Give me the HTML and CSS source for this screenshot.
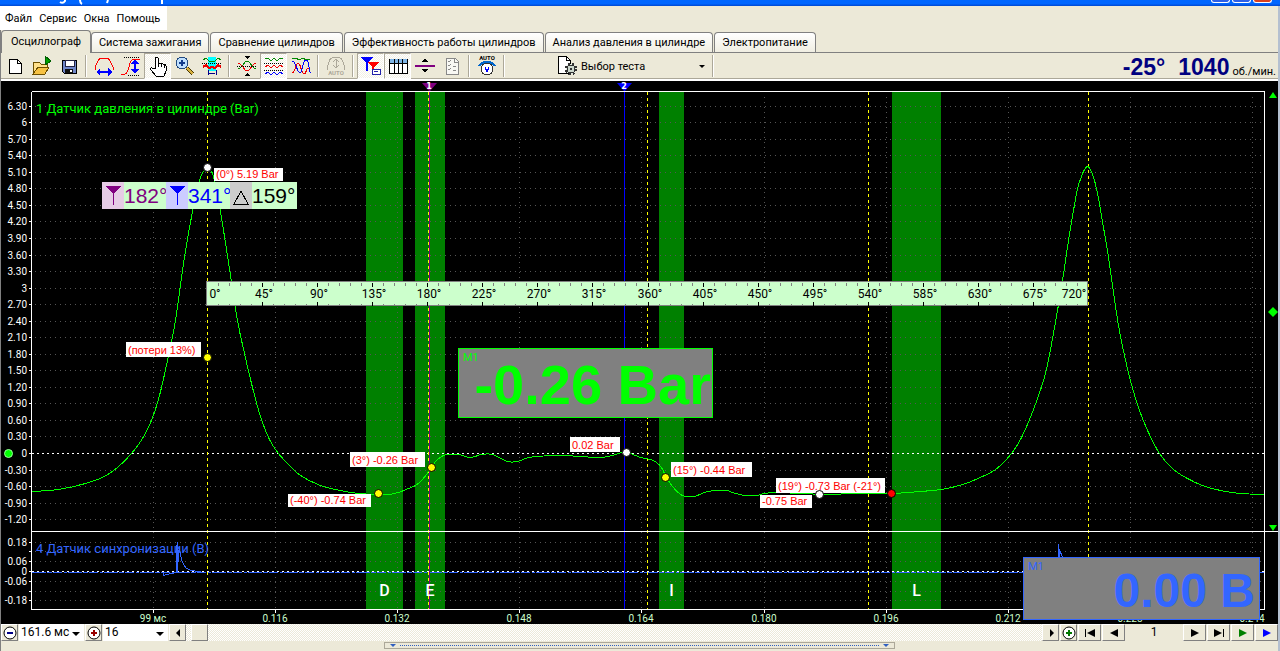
FILE: index.html
```html
<!DOCTYPE html>
<html lang="ru">
<head>
<meta charset="utf-8">
<title>Осциллограф</title>
<link rel="stylesheet" href="styles.css">
</head>
<body>
<div class="app">
  <header class="titlebar">
    <svg class="title-tails" width="180" height="6" aria-hidden="true"><g fill="none" stroke="#fff" stroke-width="2"><path d="M60 2q3 2 5-1V0M80 0q0 3 2 4M108 0l-1 3M162 0v4"/></g></svg>
    <div class="win-buttons"><i class="win"></i><i class="win"></i><i class="win win-close"></i></div>
  </header>

  <nav class="menu">
    <a href="#file">Файл</a><a href="#service">Сервис</a><a href="#windows">Окна</a><a href="#help">Помощь</a>
  </nav>

  <div class="tabs" role="tablist">
    <button class="tab active" role="tab" aria-selected="true">Осциллограф</button>
    <button class="tab" role="tab">Система зажигания</button>
    <button class="tab" role="tab">Сравнение цилиндров</button>
    <button class="tab" role="tab">Эффективность работы цилиндров</button>
    <button class="tab" role="tab">Анализ давления в цилиндре</button>
    <button class="tab" role="tab">Электропитание</button>
  </div>

  <div class="toolbar">
    <button class="tool" aria-label="Новый"><svg viewBox="0 0 22 22"><path d="M5 4h8l4 4v10H5z" fill="#fff" stroke="#000"/><path d="M13 4v4h4" fill="none" stroke="#000"/></svg></button>
    <button class="tool" aria-label="Открыть"><svg viewBox="0 0 22 22"><path d="M2 19V8l2-1h4l2 2h6v3" fill="#ffe08a" stroke="#6b4e00"/><path d="M2 19l5-7h11l-4 7z" fill="#f6c244" stroke="#6b4e00"/><path d="M14 1v9l6-4z" fill="#00a000" stroke="#006000"/></svg></button>
    <button class="tool" aria-label="Сохранить"><svg viewBox="0 0 22 22"><path d="M4 5h14v13H6l-2-2z" fill="#6f86c8" stroke="#000"/><path d="M7 5h9v6H7z" fill="#fff" stroke="#224"/><path d="M7 14h8v4H7z" fill="#111"/><path d="M12 15h2v2h-2z" fill="#fff"/></svg></button>
    <i class="sep"></i>
    <button class="tool" aria-label="Период"><svg viewBox="0 0 22 22"><path d="M2 15v-3C4 10 4 3 9 3h4c5 0 5 7 7 9v3" fill="none" stroke="#f00"/><path d="M5 17h12" stroke="#00f" stroke-width="2"/><path d="M7 13v8l-4-4zM15 13v8l4-4z" fill="#00f"/></svg></button>
    <button class="tool" aria-label="Амплитуда"><svg viewBox="0 0 22 22"><path d="M1 19h4c5-1 3-15 9-15h6" fill="none" stroke="#f00"/><path d="M4 2h16M8 20h12" stroke="#000" stroke-dasharray="1 1"/><path d="M15 7v10" stroke="#00f" stroke-width="2"/><path d="M11 9h8l-4-5zM11 14h8l-4 5z" fill="#00f"/></svg></button>
    <button class="tool on" aria-label="Рука"><svg viewBox="0 0 22 22"><path d="M8 13V3q2-2 3 0v6q2-2 3 0 2-1 3 1 2-1 2 1v5l-2 5H9l-5-6q-1-3 1-2z" fill="#fff" stroke="#000"/><path d="M11 9v3M14 9v3M17 10v3" stroke="#000"/></svg></button>
    <button class="tool" aria-label="Масштаб"><svg viewBox="0 0 22 22"><path d="M13 13l6 6" stroke="#4a3a00" stroke-width="4"/><path d="M13 13l6 6" stroke="#d8b040" stroke-width="2"/><circle cx="8" cy="8" r="6" fill="#bfe0ff" stroke="#234a80"/><path d="M5 8h6M8 5v6" stroke="#123c8c" stroke-width="2"/></svg></button>
    <button class="tool" aria-label="Выделение"><svg viewBox="0 0 22 22"><path d="M7 2h8v14H7z" fill="#0ff"/><path d="M2 5l3-2 3 3h6l3-3 3 2" fill="none" stroke="#080"/><path d="M2 12l3-2 3 3 3-1 3 1 3-3 3 2" fill="none" stroke="#e00" stroke-width="2"/><path d="M1 8h20" stroke="#000" stroke-dasharray="1 1"/><path d="M7 15v5M15 15v5M8 18h6" stroke="#008"/></svg></button>
    <i class="sep"></i>
    <button class="tool" aria-label="Центр"><svg viewBox="0 0 22 22"><g fill="none"><path d="M2 14c5-1 6-8 9-8s5 7 9 8" stroke="#080"/><path d="M2 8c5 1 6 8 9 8s5-7 9-8" stroke="#e00"/><path d="M1 11h20" stroke="#000" stroke-dasharray="1 1"/></g><path d="M8 1h6l-3 3zM8 21h6l-3-3z"/></svg></button>
    <button class="tool on" aria-label="Раздельно"><svg viewBox="0 0 22 22"><g fill="none"><path d="M2 4l3-1 3 3 3-3 3 3 3-3 3 1" stroke="#080"/><path d="M2 12l3-2 3 3 3-3 3 3 3-3 3 2" stroke="#e00"/><path d="M2 19l3-2 3 3 3-3 3 3 3-3 3 2" stroke="#00f"/><path d="M1 8h20M1 15h20" stroke="#000" stroke-dasharray="1 1"/></g></svg></button>
    <button class="tool" aria-label="Совместно"><svg viewBox="0 0 22 22"><g fill="none"><path d="M2 4l4-1 3 2 4-2 3 2 4-1" stroke="#080"/><path d="M2 18c4 0 3-10 6-10s3 11 6 11 2-9 6-5" stroke="#e00"/><path d="M2 7c3-4 5 11 8 11s2-13 6-13 2 12 5 13" stroke="#00f"/></g></svg></button>
    <i class="sep"></i>
    <button class="tool" aria-label="Авто" disabled><svg viewBox="0 0 22 22"><path d="M2 15C4 3 6 2 11 2s7 1 9 13M11 4v9M8 7l3-3 3 3M8 10l3 3 3-3" fill="none" stroke="#aca899"/><text x="11" y="20" class="ico-text ico-dim">AUTO</text></svg></button>
    <i class="sep"></i>
    <button class="tool on" aria-label="Маркеры"><svg viewBox="0 0 22 22"><path d="M1 2h12L8 8v8H6V8z" fill="#00f"/><path d="M8 7h11l-5 5v5h-2v-5z" fill="#f00"/><path d="M12 14h8v5h-8z" fill="#fff" stroke="#22a"/><path d="M14 16h2v1M17 16h1" stroke="#22a" fill="none"/></svg></button>
    <button class="tool on" aria-label="Таблица"><svg viewBox="0 0 22 22"><path d="M2 4h18v14H2z" fill="#fff" stroke="#000"/><path d="M3 4h17v4H3z" fill="#7fb5e6"/><path d="M2 8h18M7 4v14M11 4v14M15 4v14" stroke="#000"/></svg></button>
    <button class="tool" aria-label="Линия"><svg viewBox="0 0 22 22"><path d="M1 11h20" stroke="#800080" stroke-width="2"/><path d="M8 7h6l-3-4zM8 14h6l-3 4z"/></svg></button>
    <button class="tool" aria-label="Отчёт"><svg viewBox="0 0 22 22"><path d="M5 3h9l3 3v13H5z" fill="#f8f8f4" stroke="#888"/><path d="M13 3v4h4M7 6l1 1 2-2M7 10l1 1 2-2M7 14l1 1 2-2M12 11h3M12 15h3" fill="none" stroke="#888"/></svg></button>
    <i class="sep"></i>
    <button class="tool" aria-label="Авто вольтметр"><svg viewBox="0 0 22 22"><text x="11" y="5" class="ico-text">AUTO</text><path d="M3 11q2-4 8-4t8 4" fill="none" stroke="#06c" stroke-width="2"/><circle cx="11" cy="14" r="6" fill="#fff" stroke="#333"/><path d="M9 12l2 5 2-5" fill="none" stroke="#00f"/></svg></button>
    <i class="sep"></i>
    <label class="test-pick">
      <svg viewBox="0 0 22 22"><path d="M2 1h8l4 4v13H2z" fill="#fff" stroke="#000"/><path d="M10 1v4h4" fill="none" stroke="#000"/><circle cx="15" cy="14" r="5" fill="#dfe8df" stroke="#333" stroke-width="3" stroke-dasharray="2 2"/><circle cx="15" cy="14" r="4" fill="#cdd8cd" stroke="#333"/><circle cx="15" cy="14" r="1" fill="#333"/></svg>
      <select aria-label="Выбор теста"><option>Выбор теста</option></select>
    </label>
    <i class="sep"></i>
    <output class="readout"><b>-25°</b><b>1040</b><span>об./мин.</span></output>
  </div>

  <main class="scope">
    <svg class="trace" id="trace" role="img" aria-label="Осциллограмма"></svg>
    <div class="cursors">
      <i class="cur cur-a"><svg viewBox="0 0 16 20"><path d="M0 0h16L9 8v11H8V8z" fill="#800080"/></svg></i><span class="val val-a">182°</span>
      <i class="cur cur-b"><svg viewBox="0 0 16 20"><path d="M0 0h16L9 8v11H8V8z" fill="#00f"/></svg></i><span class="val val-b">341°</span>
      <i class="cur cur-d"><svg viewBox="0 0 16 20"><path d="M1 18h14L8 5z" fill="none" stroke="#000"/></svg></i><span class="val val-d">159°</span>
    </div>
    <div class="meter meter-bar"><small>M1</small><strong>-0.26 Bar</strong></div>
    <div class="meter meter-volt"><small>M1</small><strong>0.00 В</strong></div>
  </main>

  <footer class="controls">
    <button class="btn btn-s" aria-label="Уменьшить"><svg viewBox="0 0 14 14"><circle cx="7" cy="7" r="6" fill="#fff" stroke="#000"/><path d="M4 7h6" stroke="#008" stroke-width="2"/></svg></button>
    <label class="drop"><select aria-label="Время"><option>161.6 мс</option></select></label>
    <button class="btn btn-s" aria-label="Увеличить"><svg viewBox="0 0 14 14"><circle cx="7" cy="7" r="6" fill="#fff" stroke="#000"/><path d="M4 7h6M7 4v6" stroke="#900" stroke-width="2"/></svg></button>
    <label class="drop"><select aria-label="Масштаб"><option>16</option></select></label>
    <div class="scroll">
      <button class="btn btn-s" aria-label="Влево"><svg viewBox="0 0 14 14"><path d="M9 3v8L5 7z"/></svg></button>
      <i class="thumb"></i>
      <button class="btn btn-s" aria-label="Вправо"><svg viewBox="0 0 14 14"><path d="M6 3v8l4-4z"/></svg></button>
    </div>
    <button class="btn btn-s" aria-label="Добавить"><svg viewBox="0 0 14 14"><circle cx="7" cy="7" r="6" fill="#fff" stroke="#000"/><path d="M4 7h6M7 4v6" stroke="#070" stroke-width="2"/></svg></button>
    <button class="btn" aria-label="В начало"><svg viewBox="0 0 14 14"><path d="M2 3h1v8H2zM12 3v8L4 7z"/></svg></button>
    <button class="btn" aria-label="Назад"><svg viewBox="0 0 14 14"><path d="M11 3v8L3 7z"/></svg></button>
    <span class="page">1</span>
    <button class="btn" aria-label="Вперёд"><svg viewBox="0 0 14 14"><path d="M3 3v8l8-4z"/></svg></button>
    <button class="btn" aria-label="В конец"><svg viewBox="0 0 14 14"><path d="M2 3v8l8-4zM11 3h1v8h-1z"/></svg></button>
    <button class="btn" aria-label="Пуск"><svg viewBox="0 0 14 14"><path d="M3 3v8l8-4z" fill="#008000"/></svg></button>
    <button class="btn" aria-label="Запись"><svg viewBox="0 0 14 14"><path d="M3 3v8l8-4z" fill="#00f"/></svg></button>
  </footer>
  <div class="status"><div class="grip"><i class="grip-arrow"></i><i class="grip-dots"></i><i class="grip-arrow"></i></div></div>
</div>
<script src="scope.js"></script>
</body>
</html>
```

FILE: styles.css
```css
* { box-sizing: border-box; }
body { margin: 0; font: 11px/14px Roboto, "Open Sans", sans-serif; color: #000; background: #ece9d8; }
button, select { font: inherit; color: inherit; margin: 0; padding: 0; border: 0; background: none; border-radius: 0; }
.app { display: flex; flex-direction: column; min-height: 100vh; border-left: 1px solid #808080; border-right: 2px solid #b4c0d0; }

.titlebar { display: flex; justify-content: space-between; height: 6px; margin: 0 -2px 0 -1px; overflow: hidden; background: linear-gradient(#0066ff 60%, #0048d0); }
.win-buttons { display: flex; gap: 2px; padding-right: 8px; }
.win { width: 19px; height: 3px; border: 1px solid #fff; border-top: 0; border-radius: 0 0 3px 3px; background: #2c60e8; }
.win-close { background: #d84020; }

.menu { display: flex; gap: 7px; align-self: flex-start; height: 24px; padding: 6px 7px 0 5px; background: #fff; margin-left: -1px; }
.menu a { color: #000; text-decoration: none; }

.tabs { display: flex; align-items: flex-end; gap: 1px; height: 23px; border-bottom: 1px solid #808080; }
.tab { height: 20px; padding: 0 7px; white-space: nowrap; border: 1px solid #808080; border-bottom: 0; border-radius: 4px 4px 0 0; background: linear-gradient(#fff, #f0eee2); }
.tab.active { height: 23px; margin: 0 -1px -1px 0; padding: 0 9px; background: #ece9d8; }

.toolbar { display: flex; align-items: center; height: 28px; border-bottom: 2px solid #fff; box-shadow: inset 0 -1px #aca899; }
.tool { display: flex; align-items: center; justify-content: center; flex: none; width: 27px; height: 26px; }
.tool svg, .test-pick svg { width: 22px; height: 22px; flex: none; shape-rendering: crispEdges; }
.tool.on { background: repeating-conic-gradient(#fff 0 25%, #f2f0e6 0 50%) 0 0 / 2px 2px; border: 1px solid; border-color: #aca899 #fff #fff #aca899; }
.sep { flex: none; width: 2px; height: 22px; margin: 0 3px; border-left: 1px solid #aca899; border-right: 1px solid #fff; }
.ico-text { font: 700 6px Roboto, sans-serif; text-anchor: middle; }
.ico-dim { fill: #aca899; }
.test-pick { position: relative; display: flex; align-items: center; width: 153px; margin-left: 48px; }
.test-pick select { appearance: none; flex: 1; margin-left: 3px; padding-top: 1px; }
.test-pick::after, .drop::after { content: ""; border: 4px solid transparent; border-top-color: #000; border-bottom: 0; position: absolute; right: 4px; top: 50%; margin-top: -1px; pointer-events: none; }
.test-pick::after { border-width: 3px; border-bottom: 0; }
.readout { display: flex; align-items: baseline; margin-left: auto; padding: 3px 2px 0 0; color: #000080; font: 700 23px/23px "Liberation Sans", Arial, sans-serif; }
.readout b + b { margin: 0 3px 0 13px; }
.readout span { color: #000; font: 11px/14px Roboto, sans-serif; }

.scope { position: relative; flex: 1; min-height: 400px; background: #000; overflow: hidden; }
.trace { position: absolute; inset: 0; width: 100%; height: 100%; }
.axis { font: 10px Roboto, sans-serif; fill: #fff; }
.axis-time { fill: #ccffcc; text-anchor: middle; }
.axis-y { text-anchor: end; }
.channel { font: 13px Roboto, sans-serif; }
.tag { font: 11px "Liberation Sans", Arial, sans-serif; fill: #f00; }
.deg { font: 12px Roboto, sans-serif; fill: #000; text-anchor: middle; }
.phase { font: 500 16px Roboto, sans-serif; fill: #fff; text-anchor: middle; }
.flag { font: 700 8px "DejaVu Sans", sans-serif; fill: #fff; text-anchor: middle; }

.cursors { position: absolute; left: 101px; top: 101px; display: flex; height: 27px; background: #ccffcc; font: 21px/27px "Liberation Sans", Arial, sans-serif; }
.cur { display: flex; align-items: center; justify-content: center; width: 22px; }
.cur svg { width: 16px; height: 20px; shape-rendering: crispEdges; }
.cur-a { background: #e6cce6; }
.cur-b { background: #ccccff; }
.cur-d { background: #cccccc; }
.val { width: 42px; overflow: hidden; }
.val-a { color: #800080; }
.val-b { color: #0000ff; }
.val-d { width: 45px; }

.meter { position: absolute; display: flex; justify-content: flex-end; background: #808080; white-space: nowrap; font-family: "Liberation Sans", Arial, sans-serif; }
.meter small { position: absolute; left: 4px; top: 2px; font: 11px/14px Roboto, sans-serif; }
.meter-bar { left: 457px; top: 267px; width: 255px; height: 70px; padding-right: 1px; color: #00ff00; border: 1px solid #00ff00; font-size: 56px; line-height: 72px; }
.meter-volt { right: 18px; bottom: 4px; width: 237px; height: 63px; padding-right: 4px; color: #3366ff; border: 1px solid #3366ff; font-size: 48px; line-height: 66px; }

.controls { display: flex; align-items: stretch; height: 17px; gap: 1px; }
.btn { display: flex; align-items: center; justify-content: center; flex: none; width: 23px; background: #ece9d8; border: 1px solid; border-color: #fff #808080 #808080 #fff; }
.btn-s { width: 17px; }
.btn svg { width: 14px; height: 14px; flex: none; }
.drop { position: relative; flex: none; width: 65px; background: #fff; }
.drop select { appearance: none; width: 100%; height: 17px; padding-left: 2px; font-size: 12px; line-height: 17px; }
.scroll { display: flex; flex: 1; background: repeating-conic-gradient(#fff 0 25%, #ece9d8 0 50%) 0 0 / 2px 2px; }
.thumb { width: 17px; margin: 0 auto 0 5px; background: #ece9d8; border: 1px solid; border-color: #fff #808080 #808080 #fff; }
.page { width: 56px; text-align: center; font-size: 12px; line-height: 17px; }

.status { height: 10px; padding-top: 1px; }
.grip { display: flex; align-items: center; justify-content: space-between; width: 40%; height: 7px; margin: 0 auto; padding: 0 5px; border: 1px solid #aca899; }
.grip-arrow { border: 3px solid transparent; border-top-color: #3060c0; border-bottom: 0; }
.grip-dots { flex: 1; margin: 0 4px; border-top: 1px dotted #3060c0; }
```

FILE: scope.js
```js
// Draws the oscillogram. Chart data is kept in base units (a 1277 x 543 field)
// and mapped to the current size of the panel.
const BASE_W = 1277, BASE_H = 543;
const svg = document.getElementById('trace');

const pressure = [[31,410],[57,408],[84,402],[103,395],[116,386],[130,372],[141,357],[150,339],[158,314],[166,279],[174,239],[182,182],[191,130],[198,99],[202,90],[206,86],[210,90],[213,99],[219,130],[227,181],[236,239],[243,272],[251,306],[259,335],[268,358],[277,372],[287,383],[299,394],[319,404],[339,409],[357,412],[377,413],[387,413],[397,411],[407,407],[414,404],[421,398],[430,386],[435,379],[442,374],[449,373],[457,373],[469,376],[480,373],[491,373],[506,380],[516,380],[524,377],[534,375],[559,374],[579,375],[599,376],[611,374],[621,371],[629,372],[639,376],[649,378],[655,381],[660,386],[664,394],[671,405],[679,413],[685,415],[693,415],[703,411],[713,409],[725,409],[734,412],[744,414],[755,414],[763,412],[774,411],[799,412],[829,413],[849,412],[889,412],[919,410],[940,408],[954,405],[967,401],[981,395],[991,390],[999,384],[1010,372],[1020,356],[1032,328],[1044,292],[1053,246],[1061,199],[1067,159],[1072,129],[1076,107],[1080,95],[1083,88],[1086,85],[1089,88],[1093,99],[1097,117],[1102,146],[1107,176],[1112,211],[1117,244],[1123,274],[1130,303],[1138,329],[1147,351],[1158,372],[1172,388],[1186,397],[1201,404],[1219,409],[1239,412],[1263,413]];
const syncPulse = [[162,491],[162,494],[165,493],[170,492],[175,491],[175,466],[176,461],[176,491],[177,470],[178,468],[180,478],[182,483],[185,487],[190,489],[196,490],[203,491]];
const syncPulse2 = [[1057,491],[1057,463],[1058,480],[1058,468],[1061,476]];
const yellowX = [206, 427, 646, 867, 1087];
const phases = [[365,402,'D'],[414,444,'E'],[658,683,'I'],[891,940,'L']];
const times = ['99 мс','0.116','0.132','0.148','0.164','0.180','0.196','0.212','0.228','0.244'];
// x, y, width, height, text
const tags = [[213,87,69,13,'(0°) 5.19 Bar'],[125,261,75,15,'(потери 13%)'],[287,413,83,13,'(-40°) -0.74 Bar'],[349,371,75,15,'(3°) -0.26 Bar'],[569,356,50,15,'0.02 Bar'],[670,381,81,15,'(15°) -0.44 Bar'],[759,414,52,13,'-0.75 Bar'],[775,397,109,15,'(19°) -0.73 Bar (-21°)']];
const dots = [[206,86,'#fff'],[206,276,'#ff0'],[377,412,'#ff0'],[430,386,'#ff0'],[625,371,'#fff'],[664,396,'#ff0'],[818,413,'#fff'],[890,412,'#f00']];

// Catmull-Rom spline through the points, as cubic Bezier segments
function spline(p) {
  let d = `M${p[0]}`;
  for (let i = 0; i < p.length - 1; i++) {
    const a = p[i - 1] || p[i], b = p[i], c = p[i + 1], e = p[i + 2] || c;
    d += `C${b[0] + (c[0] - a[0]) / 6} ${b[1] + (c[1] - a[1]) / 6} ${c[0] - (e[0] - b[0]) / 6} ${c[1] - (e[1] - b[1]) / 6} ${c[0]} ${c[1]}`;
  }
  return d;
}

function draw() {
  const w = svg.clientWidth, h = svg.clientHeight;
  const X = v => Math.round(v * w / BASE_W), Y = v => Math.round(v * h / BASE_H);
  const out = [];
  const rect = (x, y, rw, rh, fill, extra = '') => out.push(`<rect x="${x}" y="${y}" width="${rw}" height="${rh}" fill="${fill}" ${extra}/>`);
  const line = (x1, y1, x2, y2, c, dash = '', sw = 1) => out.push(`<path d="M${x1} ${y1}L${x2} ${y2}" transform="translate(.5 .5)" stroke="${c}" stroke-width="${sw}" stroke-dasharray="${dash}" shape-rendering="crispEdges"/>`);
  const text = (x, y, cls, s, fill = '') => out.push(`<text x="${x}" y="${y}" class="${cls}" ${fill && `style="fill:${fill}"`}>${s}</text>`);
  const curve = (d, c) => out.push(`<path d="${d}" transform="translate(.5 .5)" fill="none" stroke="${c}" shape-rendering="crispEdges"/>`);
  const map = pts => pts.map(p => [X(p[0]), Y(p[1])]);
  const shape = (x, y, d, c) => out.push(`<path transform="translate(${x} ${y})" d="${d}" fill="${c}"/>`);
  const L = X(30), R = X(1263), T = Y(10), M = Y(450), B = Y(528), Z = Y(372), S = Y(490);

  phases.forEach(([a, b]) => rect(X(a), T, X(b) - X(a), B - T, '#008000'));

  for (let i = 21; i >= -4; i--) {
    const y = Math.round(Z - i * h * 16.54 / BASE_H), v = i * 0.3;
    if (i) line(L + 3, y, R, y, '#555', '1 4');
    line(L - 3, y, L, y, '#fff');
    text(L - 4, y + 4, 'axis axis-y', i % 10 ? v.toFixed(2) : String(Math.round(v)));
  }
  for (let i = 3; i >= -3; i--) {
    const y = Math.round(S - i * h * 9.8 / BASE_H);
    if (i) line(L + 3, y, R, y, '#555', '1 4');
    line(L - 3, y, L, y, '#fff');
    if (Math.abs(i) !== 2) text(L - 4, y + 4, 'axis axis-y', i ? (i * 0.06).toFixed(2) : '0');
  }
  times.forEach((s, i) => {
    const x = X(152 + i * 122.1);
    line(x, T + 5, x, B, '#555', '1 4');
    line(x, B, x, B + 3, '#fff');
    text(x, B + 13, 'axis axis-time', s);
  });

  line(L, Z, R, Z, '#fff', '2 3');
  line(L, S + 1, R, S + 1, '#3366ff', '14 1 5 1 9 2 3 1');
  line(L, S, R, S, '#fff', '2 3');
  curve('M' + map(syncPulse).join('L'), '#3366ff');
  curve('M' + map(syncPulse2).join('L'), '#3366ff');
  line(X(428), T, X(428), B, '#800080');
  yellowX.forEach(x => line(X(x), T, X(x), B, '#ff0', '3 3'));
  line(X(623), T, X(623), B, '#00f');
  curve(spline(map(pressure)), '#0f0');

  line(L, T, R, T, '#fff');
  line(L, T, L, B, '#fff');
  line(R, T, R, B, '#fff');
  line(L, B, R, B, '#fff');
  line(L, M, w, M, '#fff');

  text(L + 5, T + 22, 'channel', '1 Датчик давления в цилиндре (Bar)', '#00ff00');
  text(L + 5, M + 22, 'channel', '4 Датчик синхронизации (В)', '#3366ff');
  phases.forEach(([a, b, s]) => text((X(a) + X(b)) / 2, B - 13, 'phase', s));

  shape(X(428), 2, 'M-7 0H8L1 8H0z', '#800080');
  text(X(428), 8, 'flag', '1');
  shape(X(623), 2, 'M-7 0H8L1 8H0z', '#0000ff');
  text(X(623), 8, 'flag', '2');

  // crank angle ruler
  const rx = X(205), rw = X(1087) - rx, ry = Y(200), x0 = X(206), step = (X(1087) - x0) / 80;
  rect(rx + .5, ry + .5, rw - 1, 24, '#ccffcc', 'stroke="#808080"');
  for (let i = 1; i < 80; i++) {
    const x = Math.round(x0 + i * step), major = i % 5 === 0, c = major ? '#000' : '#808080';
    line(x, ry + 1, x, ry + (major ? 5 : 4), c);
    line(x, ry + (major ? 20 : 22), x, ry + 24, c);
    if (major && i) text(x + 2, ry + 17, 'deg', i * 9 + '°');
  }
  text(x0 + 8, ry + 17, 'deg', '0°');
  text(rx + rw - 14, ry + 17, 'deg', '720°');

  tags.forEach(([x, y, tw, th, s]) => {
    rect(X(x), Y(y), tw, th, '#fff');
    text(X(x) + 2, Y(y) + th - 3, 'tag', s);
  });
  dots.forEach(([x, y, c]) => out.push(`<circle cx="${X(x) + .5}" cy="${Y(y) + .5}" r="4" fill="${c}" stroke="#000"/>`));
  out.push(`<circle cx="7.5" cy="${Z + .5}" r="4" fill="#0f0" stroke="#9f9"/>`);
  shape(w - 5, T, 'M-4 7H4L0 1z', '#00ff00');
  shape(w - 5, Y(230) + 1, 'M-5 0L0-5L5 0L0 5z', '#00ff00');
  shape(w - 5, M - 6, 'M-4 0H4L0 6z', '#00ff00');
  svg.innerHTML = out.join('');
}
draw();
addEventListener('resize', draw);
```
